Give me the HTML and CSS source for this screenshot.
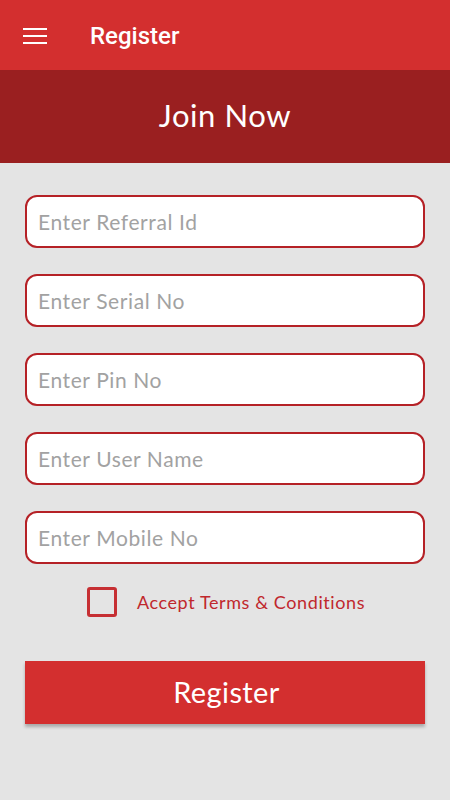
FILE: index.html
```html
<!DOCTYPE html>
<html>
<head>
<meta charset="utf-8">
<link rel="stylesheet" href="styles.css">
</head>
<body>
<header class="toolbar">
  <svg class="menu" width="24" height="16" viewBox="0 0 24 16"><rect x="0" y="0" width="24" height="2" fill="#fff"/><rect x="0" y="7" width="24" height="2" fill="#fff"/><rect x="0" y="14" width="24" height="2" fill="#fff"/></svg>
  <span class="title">Register</span>
</header>
<div class="banner">Join Now</div>
<main class="form">
  <div class="field">Enter Referral Id</div>
  <div class="field">Enter Serial No</div>
  <div class="field">Enter Pin No</div>
  <div class="field">Enter User Name</div>
  <div class="field">Enter Mobile No</div>
  <label class="terms"><span class="box"></span><span class="terms-text">Accept Terms &amp; Conditions</span></label>
  <button class="btn">Register</button>
</main>
</body>
</html>
```
FILE: styles.css
```css
* { box-sizing: border-box; }
html, body { margin: 0; padding: 0; }
body { width: 450px; height: 800px; background: #e4e4e4; font-family: "Lato", "DejaVu Sans", sans-serif; overflow: hidden; }
.toolbar { height: 70px; background: #d32f2f; display: flex; align-items: center; padding-left: 23px; }
.menu { display: block; margin-top: 1px; }
.title { font-family: "Roboto", sans-serif; font-weight: 500; font-size: 24px; color: #fff; margin-left: 43px; margin-top: 2px; }
.banner { height: 93px; background: #9a1f20; color: #fff; display: flex; align-items: center; justify-content: center; font-size: 31px; letter-spacing: 0.6px; padding-bottom: 4px; }
.form { padding: 32px 25px 0; display: flex; flex-direction: column; gap: 26px; }
.field { height: 53px; background: #fff; border: 2px solid #b52126; border-radius: 12px; display: flex; align-items: center; padding-left: 11px; font-size: 21px; color: #a2a2a2; letter-spacing: 0.6px; }
.terms { display: flex; align-items: center; justify-content: center; gap: 20px; margin-top: -3px; padding-left: 2px; }
.box { width: 30px; height: 30px; border: 3px solid #c62f33; border-radius: 3px; }
.terms-text { font-size: 18px; color: #c0282d; letter-spacing: 0.6px; }
.btn { margin-top: 18px; height: 63px; border: none; background: #d32f2f; color: #fff; font-family: inherit; font-size: 29px; letter-spacing: 0.4px; box-shadow: 0 3px 3px rgba(0,0,0,0.25); padding: 0 0 3px 3px; }
```
